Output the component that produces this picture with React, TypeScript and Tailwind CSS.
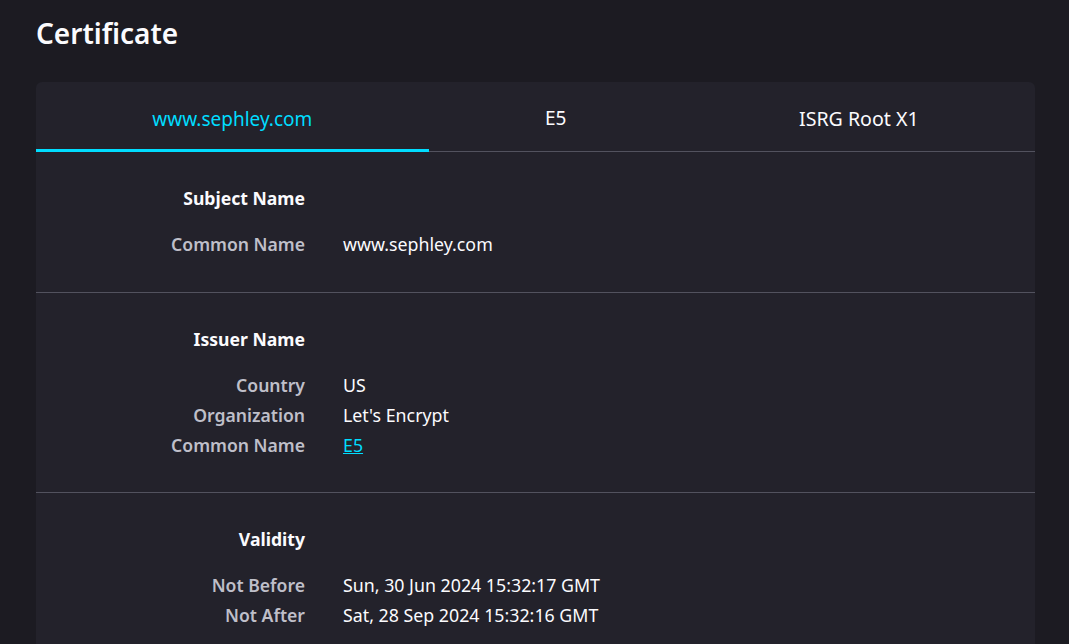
import React from "react";

const font = { fontFamily: '"Noto Sans", "Open Sans", sans-serif' };

function Row({ label, value, link }: { label: string; value: string; link?: boolean }) {
  return (
    <div className="flex h-[30px] items-center">
      <div className="w-[269px] shrink-0 text-right text-[17.6px] font-semibold text-[#bfbfc9]">{label}</div>
      <div className="ml-[38px] text-[17.8px] text-[#fbfbfe]">
        {link ? <a className="text-[#00ddff] underline">{value}</a> : value}
      </div>
    </div>
  );
}

function Section({
  title,
  rows,
  last,
  pb,
}: {
  title: string;
  rows: { label: string; value: string; link?: boolean }[];
  last?: boolean;
  pb: string;
}) {
  return (
    <div className={`pt-[31px] ${pb} ${last ? "" : "border-b border-[#52525e]"}`}>
      <div className="flex h-[30px] items-center">
        <div className="w-[269px] shrink-0 text-right text-[17.6px] font-bold text-[#fbfbfe]">{title}</div>
      </div>
      <div className="mt-[16px] flex flex-col">
        {rows.map((r) => (
          <Row key={r.label} {...r} />
        ))}
      </div>
    </div>
  );
}

export default function App() {
  return (
    <div className="min-h-[644px] h-[644px] overflow-hidden bg-[#1c1b22] px-[36px]" style={font}>
      <h1 className="pt-[13px] text-[28px] font-semibold leading-[40px] text-[#fbfbfe]">Certificate</h1>
      <div className="mt-[29px] w-[999px] rounded-[6px] bg-[#23222b]">
        <div className="flex h-[70px] border-b border-[#52525e]">
          <div className="flex flex-auto items-center justify-center border-b-[3px] border-[#00ddff] pt-[7px] text-[19px] text-[#00ddff] -mb-px">
            www.sephley.com
          </div>
          <div className="flex flex-auto items-center justify-center pt-[4px] text-[19px] text-[#fbfbfe]">E5</div>
          <div className="flex flex-auto items-center justify-center pt-[4px] text-[19.6px] text-[#fbfbfe]">ISRG Root X1</div>
        </div>
        <Section title="Subject Name" pb="pb-[33px]" rows={[{ label: "Common Name", value: "www.sephley.com" }]} />
        <Section
          title="Issuer Name"
          pb="pb-[32px]"
          rows={[
            { label: "Country", value: "US" },
            { label: "Organization", value: "Let's Encrypt" },
            { label: "Common Name", value: "E5", link: true },
          ]}
        />
        <Section
          title="Validity"
          pb="pb-[32px]"
          last
          rows={[
            { label: "Not Before", value: "Sun, 30 Jun 2024 15:32:17 GMT" },
            { label: "Not After", value: "Sat, 28 Sep 2024 15:32:16 GMT" },
          ]}
        />
      </div>
    </div>
  );
}
